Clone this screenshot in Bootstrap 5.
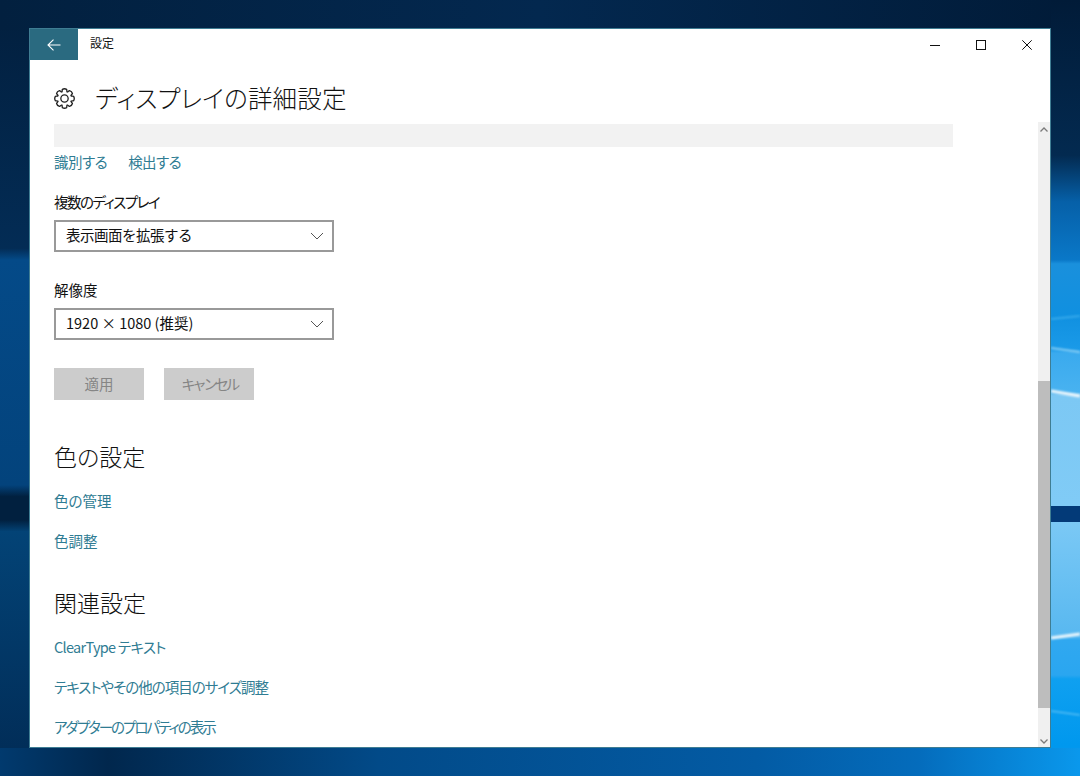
<!doctype html>
<html lang="ja">
<head>
<meta charset="utf-8">
<title>設定</title>
<link href="https://cdn.jsdelivr.net/npm/bootstrap@5.3.0/dist/css/bootstrap.min.css" rel="stylesheet">
<style>
html,body{height:776px;overflow:hidden;background:#02213f}
body{font-family:"Noto Sans CJK JP","Noto Sans",sans-serif;font-size:14.5px;color:#111;font-feature-settings:"palt"}
.wallpaper{position:absolute;left:0;top:0;width:1080px;height:776px}
.settings-win{position:absolute;left:29px;top:28px;width:1022px;height:720px;background:#fff;border:1px solid #3f7d93;overflow:hidden}
.title-strip{height:31px}
.back-btn{width:48px;background:#2a6a80;border:0;border-radius:0;padding:0}
.app-name{font-size:12px;line-height:28px;margin-left:12px}
.win-ctl{width:46px;height:31px;padding:0;border:0;border-radius:0;background:transparent}
.page-head{height:62px;padding-left:24px;padding-top:14px}
.page-title{font-size:24.5px;font-weight:300;line-height:36px;margin:0 0 0 20px;letter-spacing:.2px}
.body-wrap{height:625px}
.scroll-pane{width:1008px;padding-left:24px;padding-top:2px;overflow:hidden}
.grey-bar{width:899px;height:23px;background:#f2f2f2}
.lnk{color:#2f7c93;text-decoration:none;line-height:20px;display:block}
.lnk-row{margin-top:5px;gap:21px}
.fld-label{line-height:20px;margin-top:20px;margin-bottom:8px}
.fld-label.later{margin-top:28px}
.win-select{width:280px;height:32px;border:2px solid #999;border-radius:0;font-size:14.5px;line-height:20px;padding:0 30px 2px 10px;color:#111;box-shadow:none;background-position:right 8px center;background-size:14px 8px;background-image:url("data:image/svg+xml,%3Csvg xmlns='http://www.w3.org/2000/svg' viewBox='0 0 14 8'%3E%3Cpath d='M1 1l6 6 6-6' fill='none' stroke='%23555' stroke-width='1'/%3E%3C/svg%3E")}
.act-row{margin-top:28px;gap:20px}
.act-btn,.act-btn:disabled{width:90px;height:32px;padding:0;background:#ccc;border:0;border-radius:0;color:#858585;font-size:14.5px;opacity:1}
.sec-title{font-size:23px;font-weight:300;line-height:32px;margin:0}
.sec-one{margin-top:40px}
.sec-two{margin-top:35px}
.lnk-first{margin-top:19px}
.lnk-next{margin-top:20px}
.scroll-rail{width:12px;background:#f0f0f0;margin-left:1px}
.rail-end{height:14px}
.rail-space-top{height:245px}
.rail-thumb{height:327px;background:#bdbdbd}
.rail-tail{padding-bottom:3px}
.sq-05{letter-spacing:-.5px}
.sq-07{letter-spacing:-.7px}
.sq-10{letter-spacing:-1px}
.sq-15{letter-spacing:-1.5px}
.sq-19{letter-spacing:-2px}
.sq-30{letter-spacing:-3.400px}
</style>
</head>
<body>
<svg class="wallpaper" viewBox="0 0 1080 776" aria-hidden="true">
  <defs>
    <linearGradient id="lg" x1="0" y1="0" x2="0" y2="776" gradientUnits="userSpaceOnUse">
      <stop offset="0" stop-color="#021f3e"/><stop offset=".32" stop-color="#032c55"/>
      <stop offset=".335" stop-color="#044a88"/><stop offset=".625" stop-color="#03437c"/>
      <stop offset=".64" stop-color="#01203f"/><stop offset=".67" stop-color="#01203f"/>
      <stop offset=".685" stop-color="#034376"/><stop offset="1" stop-color="#012b55"/>
    </linearGradient>
    <linearGradient id="rg" x1="0" y1="0" x2="0" y2="776" gradientUnits="userSpaceOnUse">
      <stop offset="0" stop-color="#011b38"/><stop offset=".2" stop-color="#032a50"/>
      <stop offset=".26" stop-color="#0660a8"/><stop offset=".335" stop-color="#0a78c8"/>
      <stop offset=".34" stop-color="#1a90dc"/><stop offset=".405" stop-color="#1090e0"/>
      <stop offset=".45" stop-color="#1a9ae8"/><stop offset=".455" stop-color="#3aaaee"/>
      <stop offset=".505" stop-color="#48b2f0"/><stop offset=".51" stop-color="#7cc8f4"/>
      <stop offset=".65" stop-color="#80cbf6"/><stop offset=".82" stop-color="#58b8f0"/>
      <stop offset=".825" stop-color="#30a8f0"/><stop offset=".87" stop-color="#2aa6f0"/>
      <stop offset=".875" stop-color="#0fa0f0"/><stop offset=".96" stop-color="#0098ee"/><stop offset="1" stop-color="#0a98ec"/>
    </linearGradient>
    <linearGradient id="bg" x1="0" y1="0" x2="1" y2="0">
      <stop offset="0" stop-color="#013a6e"/><stop offset=".1" stop-color="#01274d"/>
      <stop offset=".35" stop-color="#024a88"/><stop offset=".7" stop-color="#035ba4"/>
      <stop offset=".85" stop-color="#046cbc"/><stop offset="1" stop-color="#0a98ec"/>
    </linearGradient>
    <linearGradient id="tg" x1="0" y1="0" x2="1" y2="0">
      <stop offset="0" stop-color="#02203f"/><stop offset=".5" stop-color="#03284f"/>
      <stop offset="1" stop-color="#011b38"/>
    </linearGradient>
    <filter id="soft"><feGaussianBlur stdDeviation=".8"/></filter>
  </defs>
  <rect width="1080" height="776" fill="url(#lg)"/>
  <rect y="0" width="1080" height="30" fill="url(#tg)"/>
  <rect x="1051" width="29" height="776" fill="url(#rg)"/>
  <rect y="748" width="1080" height="28" fill="url(#bg)"/>
  <rect x="1051" y="506" width="29" height="16" fill="#033a78"/>
  <g filter="url(#soft)" fill="none">
    <path d="M1051 391 L1080 396" stroke="#f2f9fd" stroke-width="3"/>
    <path d="M1051 638 L1080 634" stroke="#eef8fd" stroke-width="3"/>
    <path d="M1051 711 L1080 715" stroke="#7fd0f8" stroke-width="1"/>
    <path d="M1051 319 L1080 316" stroke="#3fb0ee" stroke-width="1.500"/>
    <path d="M1051 348 L1080 352" stroke="#a5dcf8" stroke-width="1.500"/>
  </g>
</svg>

<div class="settings-win d-flex flex-column">
  <div class="title-strip d-flex align-items-stretch flex-shrink-0">
    <button class="btn back-btn d-flex align-items-center justify-content-center" type="button" aria-label="戻る">
      <svg width="14" height="12" viewBox="0 0 14 12"><path d="M6.500.7 1 6l5.500 5.300M1 6h12.500" fill="none" stroke="#fff" stroke-width="1.100"/></svg>
    </button>
    <span class="app-name">設定</span>
    <div class="d-flex ms-auto">
      <button class="btn win-ctl d-flex align-items-center justify-content-center" type="button" aria-label="最小化"><svg width="10" height="10" viewBox="0 0 10 10"><path d="M0 5.500h10" stroke="#111" stroke-width="1"/></svg></button>
      <button class="btn win-ctl d-flex align-items-center justify-content-center" type="button" aria-label="最大化"><svg width="10" height="10" viewBox="0 0 10 10"><rect x=".5" y=".5" width="9" height="9" fill="none" stroke="#111" stroke-width="1"/></svg></button>
      <button class="btn win-ctl d-flex align-items-center justify-content-center" type="button" aria-label="閉じる"><svg width="10" height="10" viewBox="0 0 10 10"><path d="M.3.3l9.400 9.400M9.700.3.300 9.700" fill="none" stroke="#111" stroke-width="1"/></svg></button>
    </div>
  </div>

  <div class="page-head d-flex align-items-center flex-shrink-0">
    <svg width="21" height="21" viewBox="0 0 20 20" fill="none" stroke="#222" stroke-width="1.250" stroke-linejoin="round">
      <circle cx="10" cy="10" r="3.500"/>
      <g>
        <path d="M7.510 4C7.900 3 7.700 2 8 1.300C9 .7 11 .7 12 1.300C12.300 2 12.100 3 12.490 4"/>
        <path transform="rotate(45 10 10)" d="M7.510 4C7.900 3 7.700 2 8 1.300C9 .7 11 .7 12 1.300C12.300 2 12.100 3 12.490 4"/>
        <path transform="rotate(90 10 10)" d="M7.510 4C7.900 3 7.700 2 8 1.300C9 .7 11 .7 12 1.300C12.300 2 12.100 3 12.490 4"/>
        <path transform="rotate(135 10 10)" d="M7.510 4C7.900 3 7.700 2 8 1.300C9 .7 11 .7 12 1.300C12.300 2 12.100 3 12.490 4"/>
        <path transform="rotate(180 10 10)" d="M7.510 4C7.900 3 7.700 2 8 1.300C9 .7 11 .7 12 1.300C12.300 2 12.100 3 12.490 4"/>
        <path transform="rotate(225 10 10)" d="M7.510 4C7.900 3 7.700 2 8 1.300C9 .7 11 .7 12 1.300C12.300 2 12.100 3 12.490 4"/>
        <path transform="rotate(270 10 10)" d="M7.510 4C7.900 3 7.700 2 8 1.300C9 .7 11 .7 12 1.300C12.300 2 12.100 3 12.490 4"/>
        <path transform="rotate(315 10 10)" d="M7.510 4C7.900 3 7.700 2 8 1.300C9 .7 11 .7 12 1.300C12.300 2 12.100 3 12.490 4"/>
      </g>
    </svg>
    <h1 class="page-title">ディスプレイの詳細設定</h1>
  </div>

  <div class="body-wrap d-flex flex-shrink-0">
    <div class="scroll-pane">
      <div class="grey-bar"></div>
      <div class="lnk-row d-flex">
        <a class="lnk sq-05" href="#">識別する</a>
        <a class="lnk sq-05" href="#">検出する</a>
      </div>

      <div class="fld-label sq-15">複数のディスプレイ</div>
      <select class="form-select win-select sq-05" aria-label="複数のディスプレイ"><option>表示画面を拡張する</option></select>

      <div class="fld-label later">解像度</div>
      <select class="form-select win-select" aria-label="解像度"><option>1920 × 1080 (推奨)</option></select>

      <div class="act-row d-flex">
        <button class="btn act-btn" type="button" disabled>適用</button>
        <button class="btn act-btn sq-30" type="button" disabled>キャンセル</button>
      </div>

      <h2 class="sec-title sec-one">色の設定</h2>
      <a class="lnk lnk-first" href="#">色の管理</a>
      <a class="lnk lnk-next" href="#">色調整</a>

      <h2 class="sec-title sec-two">関連設定</h2>
      <a class="lnk lnk-first sq-07" href="#">ClearType テキスト</a>
      <a class="lnk lnk-next sq-10" href="#">テキストやその他の項目のサイズ調整</a>
      <a class="lnk lnk-next sq-19" href="#">アダプターのプロパティの表示</a>
    </div>
    <div class="scroll-rail d-flex flex-column">
      <div class="rail-end d-flex align-items-center justify-content-center"><svg width="8" height="5" viewBox="0 0 8 5"><path d="M.5 4.500 4 1l3.500 3.500" fill="none" stroke="#7a7a7a" stroke-width="1.300"/></svg></div>
      <div class="rail-space-top"></div>
      <div class="rail-thumb"></div>
      <div class="rail-tail flex-grow-1 d-flex align-items-end justify-content-center"><svg width="8" height="5" viewBox="0 0 8 5"><path d="M.5.500 4 4 7.500.5" fill="none" stroke="#7a7a7a" stroke-width="1.300"/></svg></div>
    </div>
  </div>
</div>

<script src="https://cdn.jsdelivr.net/npm/bootstrap@5.3.0/dist/js/bootstrap.bundle.min.js"></script>
</body>
</html>
